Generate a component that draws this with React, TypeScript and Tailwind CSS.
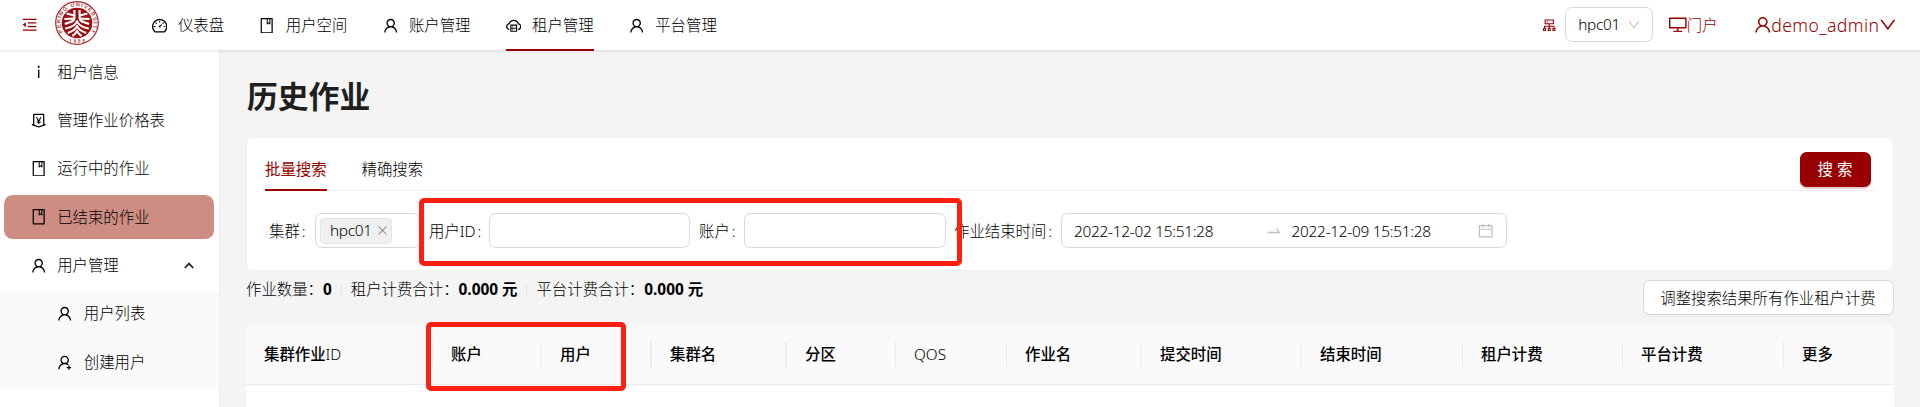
import type { ReactNode } from "react";
import type { IconType } from "react-icons";
import {
  AiOutlineBook,
  AiOutlineCalendar,
  AiOutlineClose,
  AiOutlineCloudServer,
  AiOutlineCluster,
  AiOutlineDashboard,
  AiOutlineDesktop,
  AiOutlineDown,
  AiOutlineInfo,
  AiOutlineMenuFold,
  AiOutlineMoneyCollect,
  AiOutlineSwapRight,
  AiOutlineUser,
  AiOutlineUserAdd,
} from "react-icons/ai";

function Icon({ as: Glyph, className = "" }: { as: IconType; className?: string }) {
  return <Glyph viewBox="64 64 896 896" className={`shrink-0 ${className}`} />;
}

function Logo() {
  return (
    <svg viewBox="0 0 44 44" className="size-[44px] shrink-0">
      <defs>
        <path id="ring" d="M22 22 m-16.6 0 a16.6 16.6 0 1 1 33.2 0 a16.6 16.6 0 1 1 -33.2 0" />
      </defs>
      <circle cx="22" cy="22" r="21.3" fill="#fff" stroke="#a8292c" strokeWidth="1.2" />
      <circle cx="22" cy="22" r="15.3" fill="#9b0e12" />
      <text fontSize="5.6" fontWeight="700" fill="#b04a4c" fontFamily="Liberation Sans, sans-serif" transform="rotate(-33 22 22)">
        <textPath href="#ring" startOffset="0" textLength="71">PEKING UNIVERSITY</textPath>
      </text>
      <text x="22" y="42" fontSize="5.4" fontWeight="700" textAnchor="middle" textLength="16" fill="#b04a4c" fontFamily="Liberation Serif, serif">1898</text>
      <g fill="none" stroke="#fff" strokeWidth="2.1" strokeLinejoin="round">
        <path d="M19.4 9v8.6c0 2.4-3.6 3.6-9.6 5.4" />
        <path d="M24.6 9v8.6c0 2.4 3.6 3.6 9.6 5.4" />
        <path d="M11.6 12.6l7.6 1.8M9.4 18l9.6-.4" />
        <path d="M32.4 12.6l-7.6 1.8M34.6 18l-9.6-.4" />
        <path d="M10.2 27.6c6.2-1.4 10.6-3.4 11.8-7.4 1.2 4 5.6 6 11.8 7.4" />
        <path d="M12.8 32c4.6-1.6 8-3.8 9.2-7 1.2 3.2 4.6 5.4 9.2 7" />
        <path d="M17.4 35c2.2-1.4 3.8-3 4.6-5.2.8 2.2 2.4 3.8 4.6 5.2" />
      </g>
    </svg>
  );
}

function NavItem({ icon, label, active = false }: { icon: IconType; label: string; active?: boolean }) {
  return (
    <div className="relative mx-[17.6px] flex h-[51px] items-center gap-[11px]">
      <Icon as={icon} />
      <span>{label}</span>
      {active && <i className="absolute inset-x-0 bottom-0 h-[2px] bg-[#990000]" />}
    </div>
  );
}

function SideItem({ icon, label, active = false, sub = false, open = false }: { icon: IconType; label: string; active?: boolean; sub?: boolean; open?: boolean }) {
  return (
    <div
      className={`mx-[4.4px] mb-[4.4px] flex h-[44px] shrink-0 items-center gap-[11px] rounded-[8.8px] ${sub ? "pl-[53px]" : "pl-[26.4px]"} ${active ? "bg-[#cd8d83]" : ""}`}
    >
      <Icon as={icon} />
      <span className="pt-px">{label}</span>
      {open && (
        <svg viewBox="0 0 10 7" className="mr-[20px] ml-auto h-[7px] w-[10px]">
          <path d="M.8 6L5 1.6 9.2 6" fill="none" stroke="#222" strokeWidth="1.8" />
        </svg>
      )}
    </div>
  );
}

function Label({ text, className }: { text: string; className: string }) {
  return (
    <span className={`${className} pt-[2px] whitespace-nowrap`}>
      {text}
      <span className="ml-[2px]">:</span>
    </span>
  );
}

const columns: { w: string; title: ReactNode; line?: string }[] = [
  { w: "w-[187px]", title: <>集群作业<span className="font-light">ID</span></>, line: "w-px" },
  { w: "w-[109px]", title: "账户", line: "w-px" },
  { w: "w-[110px]", title: "用户", line: "w-[2px]" },
  { w: "w-[135px]", title: "集群名", line: "w-[2px]" },
  { w: "w-[109px]", title: "分区", line: "w-px" },
  { w: "w-[111px]", title: <span className="font-light">QOS</span>, line: "w-px" },
  { w: "w-[135px]", title: "作业名", line: "w-px" },
  { w: "w-[160px]", title: "提交时间", line: "w-px" },
  { w: "w-[161px]", title: "结束时间", line: "w-px" },
  { w: "w-[160px]", title: "租户计费", line: "w-px" },
  { w: "w-[161px]", title: "平台计费", line: "w-px" },
  { w: "w-[110px]", title: "更多" },
];

const box = "h-[35px] rounded-[6.6px] border border-[#d9d9d9] bg-white";

export default function App() {
  return (
    <div className="relative flex h-[407px] w-[1920px] flex-col overflow-hidden bg-[#f4f4f4] font-['Noto_Sans','Noto_Sans_CJK_SC',sans-serif] text-[15.4px] leading-[24px] font-light text-black">
      <header className="relative z-10 flex h-[50px] shrink-0 items-start bg-white shadow-[0_1px_3px_rgba(0,0,0,0.12)]">
        <div className="flex h-[50px] items-center pl-[22px] text-[#990000]">
          <Icon as={AiOutlineMenuFold} />
        </div>
        <div className="ml-[17.6px] pt-[1px]">
          <Logo />
        </div>
        <nav className="ml-[35px] flex">
          <NavItem icon={AiOutlineDashboard} label="仪表盘" />
          <NavItem icon={AiOutlineBook} label="用户空间" />
          <NavItem icon={AiOutlineUser} label="账户管理" />
          <NavItem icon={AiOutlineCloudServer} label="租户管理" active />
          <NavItem icon={AiOutlineUser} label="平台管理" />
        </nav>
        <div className="ml-auto flex h-[50px] items-center pr-[23px] text-[#990000]">
          <Icon as={AiOutlineCluster} className="size-[14.5px]" />
          <div className={`${box} mt-[-1px] ml-[9px] flex w-[88px] items-center justify-between pr-[12px] pl-[12px] text-black`}>
            <span className="pt-px tracking-[-0.3px]">hpc01</span>
            <Icon as={AiOutlineDown} className="size-[12px] text-[#bfbfbf]" />
          </div>
          <div className="ml-[16px] flex items-center">
            <Icon as={AiOutlineDesktop} className="size-[17.6px]" />
            <span className="pt-px">门户</span>
          </div>
          <div className="ml-[36px] flex items-center text-[17.6px]">
            <Icon as={AiOutlineUser} />
            <span className="tracking-[0.42px]">demo_admin</span>
            <Icon as={AiOutlineDown} />
          </div>
        </div>
      </header>

      <div className="flex min-h-0 flex-1">
        <aside className="flex w-[219.5px] shrink-0 flex-col border-r border-[#ececec] bg-white">
          <SideItem icon={AiOutlineInfo} label="租户信息" />
          <SideItem icon={AiOutlineMoneyCollect} label="管理作业价格表" />
          <SideItem icon={AiOutlineBook} label="运行中的作业" />
          <SideItem icon={AiOutlineBook} label="已结束的作业" active />
          <SideItem icon={AiOutlineUser} label="用户管理" open />
          <div className="flex flex-col bg-[#fafafa]">
            <SideItem icon={AiOutlineUser} label="用户列表" sub />
            <SideItem icon={AiOutlineUserAdd} label="创建用户" sub />
          </div>
        </aside>

        <main className="flex w-[1674px] flex-col pl-[26.5px]">
          <h1 className="mt-[26px] pl-px text-[30.8px] leading-[40px] font-bold text-[#1f1f1f]">历史作业</h1>

          <section className="mt-[21px] h-[134px] shrink-0 rounded-[6.6px] border border-[#efefef] bg-white pr-[18px] pl-[18px]">
            <div className="flex h-[53px] items-stretch border-b border-[#f0f0f0]">
              <div className="mb-[-1px] border-b-2 border-[#990000] pt-[20px] font-normal text-[#990000]">批量搜索</div>
              <div className="ml-[35px] pt-[20px]">精确搜索</div>
              <button className="mt-[14px] mr-[4px] ml-auto h-[35px] w-[71px] rounded-[6.6px] bg-[#990000] font-normal text-white shadow-[0_2px_1px_rgba(153,0,0,0.2)]">搜 索</button>
            </div>
            <div className="mt-[22px] flex h-[35px] items-center">
              <Label text="集群" className="ml-[4px] w-[46px]" />
              <div className={`${box} flex w-[105px] items-center pl-[4px]`}>
                <span className="flex h-[26px] w-[72px] items-center rounded-[4.4px] border border-[#e4e4e4] bg-[#f0f0f0] pl-[9px]">
                  <span className="pt-px tracking-[-0.3px]">hpc01</span>
                  <Icon as={AiOutlineClose} className="ml-[5px] size-[11px] text-[#8c8c8c]" />
                </span>
              </div>
              <Label text="用户ID" className="ml-[9px] w-[60px]" />
              <div className={`${box} w-[201px]`} />
              <Label text="账户" className="ml-[9px] w-[45px]" />
              <div className={`${box} w-[202px]`} />
              <Label text="作业结束时间" className="ml-[8px] w-[107px]" />
              <div className={`${box} flex w-[446px] items-center pr-[13px] pl-[12px]`}>
                <span className="w-[191px] pt-[2px] tracking-[-0.28px]">2022-12-02 15:51:28</span>
                <AiOutlineSwapRight className="size-[17.6px] text-[#bfbfbf]" />
                <span className="ml-[9px] pt-[2px] tracking-[-0.28px]">2022-12-09 15:51:28</span>
                <Icon as={AiOutlineCalendar} className="ml-auto text-[#bfbfbf]" />
              </div>
            </div>
          </section>

          <div className="flex h-[53px] shrink-0 items-start">
            <div className="flex items-center pt-[7px]">
              <span>作业数量：<b className="font-bold">0</b></span>
              <i className="mx-[9px] h-[13px] w-px bg-[#e4e4e4]" />
              <span>租户计费合计：<b className="font-bold">0.000 元</b></span>
              <i className="mx-[9px] h-[13px] w-px bg-[#e4e4e4]" />
              <span>平台计费合计：<b className="font-bold">0.000 元</b></span>
            </div>
            <button className={`${box} mt-[9px] ml-auto w-[251px] pt-[2px] shadow-[0_2px_0_rgba(0,0,0,0.02)]`}>调整搜索结果所有作业租户计费</button>
          </div>

          <section className="flex-1 rounded-t-[8.8px] bg-white">
            <div className="flex h-[61px] items-center rounded-t-[8.8px] border-b border-[#ebebeb] bg-[#fafafa] font-medium">
              {columns.map((c, i) => (
                <div key={i} className={`${c.w} flex shrink-0 items-center justify-between pl-[18px]`}>
                  <span className="pt-px">{c.title}</span>
                  {c.line && <i className={`${c.line} h-[25px] bg-[#ebebeb]`} />}
                </div>
              ))}
            </div>
          </section>
        </main>
      </div>

      <div className="absolute top-[198px] left-[419px] z-20 h-[68px] w-[543px] rounded-[5px] border-[5px] border-[#ff2012]" />
      <div className="absolute top-[322px] left-[426px] z-20 h-[69px] w-[200px] rounded-[5px] border-[5px] border-[#ff2012]" />
    </div>
  );
}
